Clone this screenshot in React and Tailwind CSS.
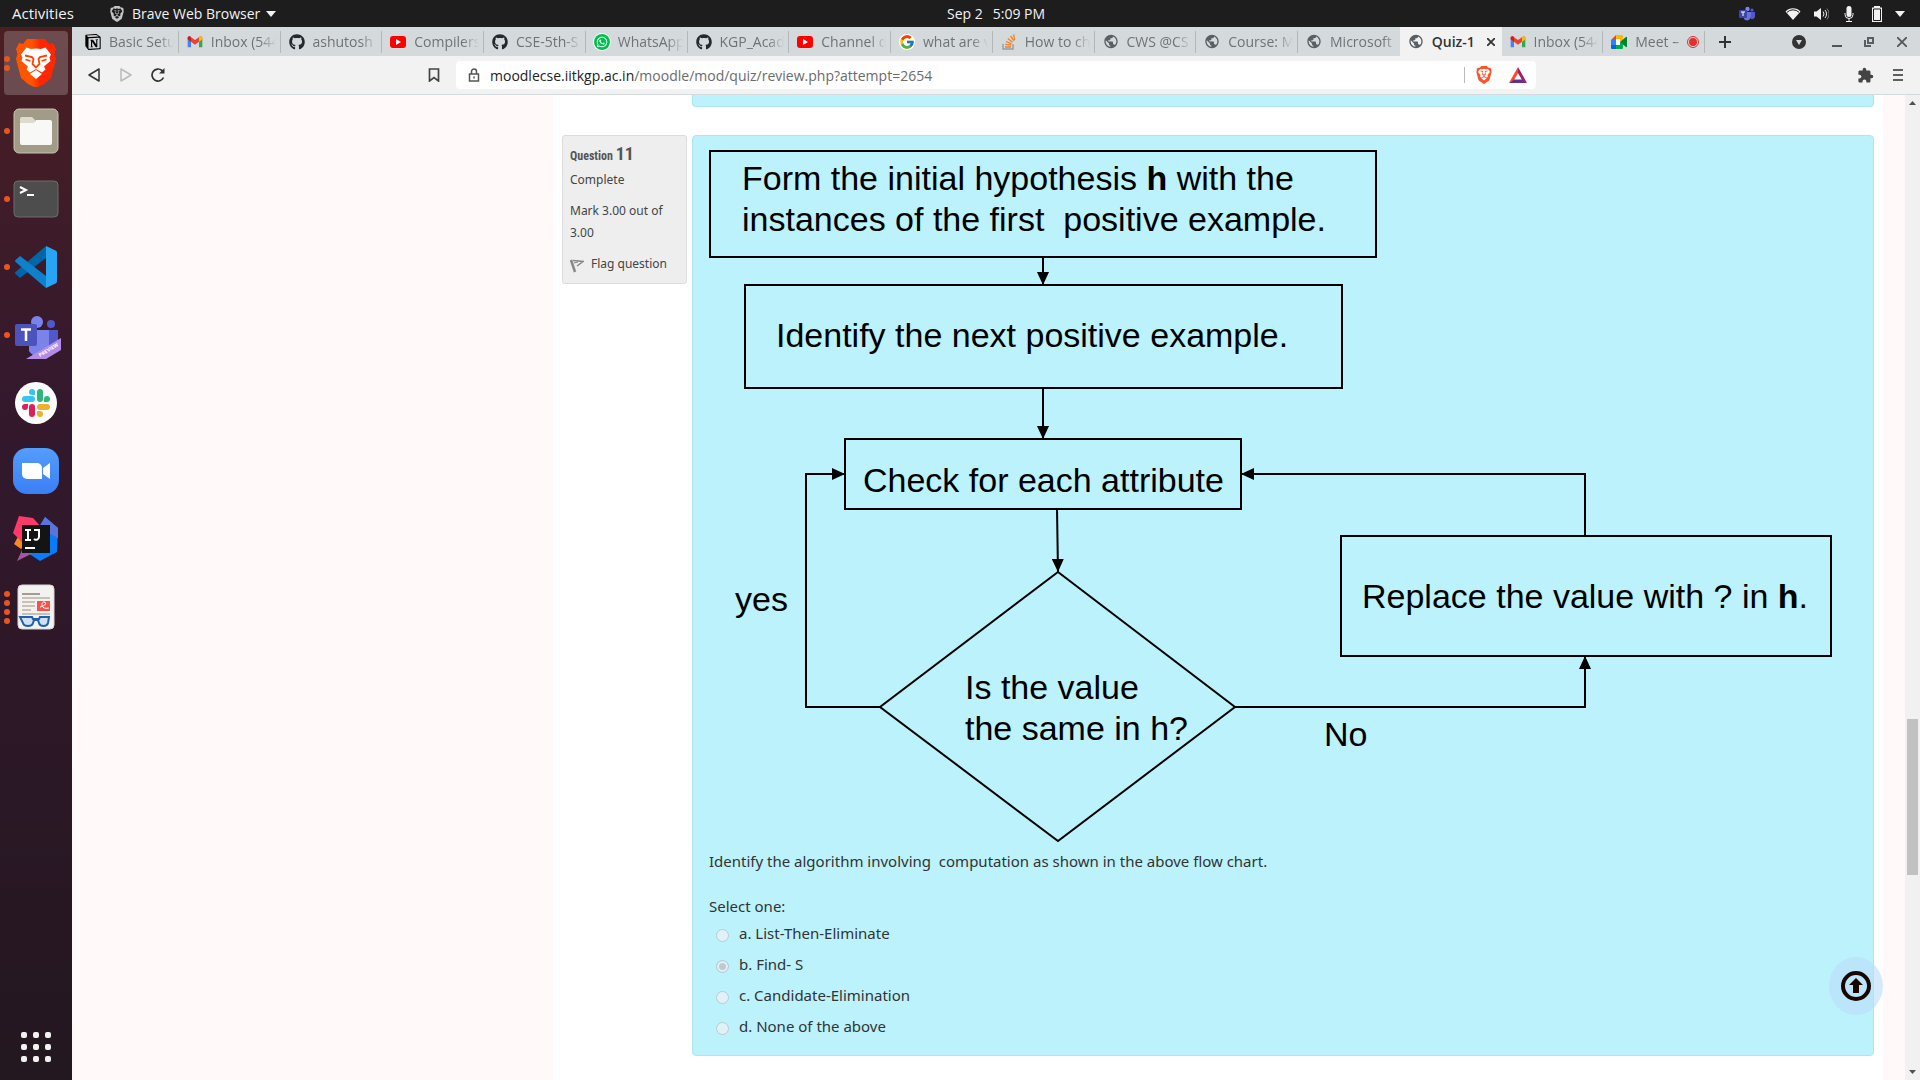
import React from "react";
import { SiBrave, SiNotion } from "react-icons/si";
import { FaGithub, FaWhatsapp } from "react-icons/fa";
import { MdExtension, MdPublic } from "react-icons/md";
import { FcGoogle } from "react-icons/fc";

function Gmail() {
  return (
    <svg viewBox="0 0 24 24" className="size-4">
      <path d="M1 20V7l5 4v9z" fill="#4285f4" />
      <path d="M18 20v-9l5-4v13z" fill="#34a853" />
      <path d="M1 8V6a2.6 2.6 0 0 1 4.2-2L12 9l6.8-5A2.6 2.6 0 0 1 23 6v2l-11 8z" fill="#ea4335" />
      <path d="M1 8V6a2.6 2.6 0 0 1 5-1v7z" fill="#c5221f" />
      <path d="M23 8V6a2.6 2.6 0 0 0-5-1v7z" fill="#fbbc04" />
    </svg>
  );
}

function YouTube() {
  return (
    <svg viewBox="0 0 16 16" className="size-4">
      <rect y="2" width="16" height="12" rx="3" fill="#ff0000" />
      <path d="M6 5v6l5-3z" fill="#fff" />
    </svg>
  );
}

function Meet() {
  return (
    <svg viewBox="0 0 16 16" className="size-4">
      <path d="M0 6l5-5v5z" fill="#ea4335" />
      <path d="M0 6h5v5H0z" fill="#2684fc" />
      <path d="M0 11h5v4H1a1 1 0 0 1-1-1z" fill="#0066da" />
      <path d="M5 1h6a1 1 0 0 1 1 1v5L9 8V5H5z" fill="#ffba00" />
      <path d="M5 11h4V8l3 2v4a1 1 0 0 1-1 1H5z" fill="#00ac47" />
      <path d="M9 8l6-5a.6.6 0 0 1 1 .5v9a.6.6 0 0 1-1 .5z" fill="#00832d" />
      <path d="M5 5h4v6H5z" fill="#fff" />
    </svg>
  );
}

function StackOverflow() {
  return (
    <svg viewBox="0 0 16 16" className="size-4" fill="none">
      <path d="M2 10v5h10v-5" stroke="#9a9c9f" strokeWidth="1.4" />
      <path d="M4 13h6M4.200 10.300l6 .9M5 7.500l5.500 2.300M6.800 4.500l4.700 3.700M9.500 2l3.500 4.800M12.500.500l1.300 5.500" stroke="#f48024" strokeWidth="1.300" />
    </svg>
  );
}

function WhatsApp() {
  return (
    <span className="flex size-4 items-center justify-center rounded-full bg-[#00bf4f] ring-1 ring-white">
      <FaWhatsapp className="size-3 text-white" />
    </span>
  );
}

function Google() {
  return (
    <span className="flex size-4 items-center justify-center rounded-full bg-white">
      <FcGoogle className="size-4" />
    </span>
  );
}

const github = <FaGithub className="size-4 text-[#24292e]" />;
const globe = <MdPublic className="size-[17px] text-[#5a5f63]" />;

const tabs = [
  { title: "Basic Setu", icon: <SiNotion className="size-4 text-black" /> },
  { title: "Inbox (544", icon: <Gmail /> },
  { title: "ashutosh", icon: github },
  { title: "Compilers", icon: <YouTube /> },
  { title: "CSE-5th-S", icon: github },
  { title: "WhatsApp", icon: <WhatsApp /> },
  { title: "KGP_Acad", icon: github },
  { title: "Channel d", icon: <YouTube /> },
  { title: "what are v", icon: <Google /> },
  { title: "How to ch", icon: <StackOverflow /> },
  { title: "CWS @CS", icon: globe },
  { title: "Course: M", icon: globe },
  { title: "Microsoft", icon: globe },
  { title: "Quiz-1", icon: globe, active: true },
  { title: "Inbox (544", icon: <Gmail /> },
  { title: "Meet –", icon: <Meet />, recording: true },
];

function TeamsTray() {
  return (
    <svg viewBox="0 0 16 16" className="size-4">
      <circle cx="8.5" cy="3" r="2.2" fill="#7b83eb" />
      <circle cx="13" cy="4" r="1.6" fill="#5059c9" />
      <path d="M5 6h7v5a4 4 0 0 1-7 2z" fill="#6a72dc" />
      <path d="M12 6h4v4a3 3 0 0 1-4 3z" fill="#5059c9" />
      <rect y="4" width="8" height="8" rx="1" fill="#3d45a8" />
      <path d="M2 6h4M4 6v4" stroke="#fff" fill="none" />
    </svg>
  );
}

function TopBar() {
  return (
    <header className="grid h-[27px] grid-cols-[1fr_auto_1fr] items-center bg-[#1d1d1d] px-3 text-[14px] text-[#f2f2f2]">
      <div className="flex items-center">
        <button className="w-[97px] text-left text-[15px]">Activities</button>
        <button className="flex items-center">
          <SiBrave className="mr-[7px] size-4 text-[#c4c4c4]" />
          Brave Web Browser
          <svg viewBox="0 0 10 6" className="ml-[6px] h-[6px] w-[10px]"><path d="M0 0h10L5 6z" fill="#f2f2f2" /></svg>
        </button>
      </div>
      <button className="ml-[72px] flex gap-[10px]"><span>Sep 2</span><span>5:09 PM</span></button>
      <div className="flex items-center justify-end">
        <span className="mr-[30px]"><TeamsTray /></span>
        <svg viewBox="0 0 16 16" className="mr-3 size-4">
          <path d="M.5 5.500a10.500 10.500 0 0 1 15 0L8 14z" fill="#f2f2f2" />
          <path d="M2 6.300a8.500 8.500 0 0 1 12 0" stroke="#1d1d1d" fill="none" />
        </svg>
        <svg viewBox="0 0 16 16" className="mr-3 size-4" fill="none" stroke="#f2f2f2">
          <path d="M1 5.500h2.500L8 2v12l-4.500-3.500H1z" fill="#f2f2f2" stroke="none" />
          <path d="M10 5.500a4 4 0 0 1 0 5M12 4a6 6 0 0 1 0 8" />
          <path d="M14 2.500a8.500 8.500 0 0 1 0 11" stroke="#777" />
        </svg>
        <svg viewBox="0 0 16 16" className="mr-3 size-4" fill="none" stroke="#f2f2f2">
          <rect x="5.500" y="0" width="5" height="11" rx="2.500" fill="#f2f2f2" stroke="none" />
          <path d="M4 7v1.500a4 4 0 0 0 8 0V7M8 12.500V15M5 15.500h6" />
        </svg>
        <svg viewBox="0 0 16 16" className="mr-[10px] size-4">
          <path d="M5 0h6v1.500h2V16H3V1.500h2z" fill="#f2f2f2" />
          <path d="M4.500 3h7v11.500h-7z" fill="none" stroke="#1d1d1d" />
        </svg>
        <svg viewBox="0 0 10 6" className="mr-[3px] h-[6px] w-[10px]"><path d="M0 0h10L5 6z" fill="#f2f2f2" /></svg>
      </div>
    </header>
  );
}

const dockApps = [
  {
    name: "Brave", dots: 2, active: true,
    icon: (
      <svg viewBox="0 0 40 48" className="h-12 w-10">
        <defs>
          <linearGradient id="braveDock" x1="0" x2="1"><stop offset=".4" stopColor="#ff5500" /><stop offset=".6" stopColor="#ff2600" /></linearGradient>
        </defs>
        <path d="M11 0h18l4 5 4-1 3 6-1.500 5 1.500 5-5 19-7 6-8 4-8-4-7-6L0 20l1.500-5L0 10l3-6 4 1z" fill="url(#braveDock)" />
        <path d="M20 9.500l5 .5 4.500-1.500 5.500 7-1.500 3 1 3.500-6.500 5.500 1.500 3-3.500 3-6-3.500-6 3.500-3.500-3 1.500-3-6.500-5.500 1-3.500-1.500-3 5.500-7L15 10z" fill="#fff" />
        <path d="M20 31l6 4-6 5-6-5z" fill="#fff" />
        <path d="M9 16.500l7 1.500 1.500 2-1 5 3.500 3.500 3.500-3.500-1-5L24 18l7-1.500M9.500 20.500l5 1.500M30.500 20.500l-5 1.500" fill="none" stroke="#ff4000" strokeWidth="1.800" />
      </svg>
    ),
  },
  {
    name: "Files", dots: 1,
    icon: (
      <svg viewBox="0 0 46 46" className="size-[46px]">
        <rect x="1" y="1" width="44" height="44" rx="5" fill="#a29b87" stroke="#c9c3b3" />
        <path d="M7 11a2 2 0 0 1 2-2h10l3 3v6H7z" fill="#dedace" />
        <path d="M7 15h14l2-3h14a2 2 0 0 1 2 2v21a2 2 0 0 1-2 2H9a2 2 0 0 1-2-2z" fill="#f8f8f7" />
      </svg>
    ),
  },
  {
    name: "Terminal", dots: 1,
    icon: (
      <svg viewBox="0 0 46 38" className="h-[38px] w-[46px]">
        <rect x="1" y="1" width="44" height="36" rx="4" fill="#4d4d4d" stroke="#6c6c6c" />
        <path d="M7 7l6 3-6 3" fill="none" stroke="#fff" strokeWidth="2" />
        <path d="M14 15h7" stroke="#fff" strokeWidth="2" />
      </svg>
    ),
  },
  {
    name: "Visual Studio Code", dots: 1,
    icon: (
      <svg viewBox="0 0 42 42" className="size-[42px]">
        <path d="M31 0v12L5 32l-4.500-4a1.500 1.500 0 0 1 0-2z" fill="#0065a9" />
        <path d="M31 42V30L5 10l-4.500 4a1.500 1.500 0 0 0 0 2z" fill="#0f80cc" />
        <path d="M31 0l9.500 4.500A2.500 2.500 0 0 1 42 7v28a2.500 2.500 0 0 1-1.500 2.500L31 42z" fill="#28a4f2" />
      </svg>
    ),
  },
  {
    name: "Teams", dots: 1,
    icon: (
      <svg viewBox="0 0 46 44" className="mt-1 ml-[3px] h-11 w-[46px]">
        <circle cx="22" cy="7" r="6" fill="#7b83eb" />
        <circle cx="36" cy="9" r="4" fill="#5059c9" />
        <path d="M30 15h13v14a9 9 0 0 1-13 7z" fill="#5059c9" />
        <path d="M14 15h20v18a11 11 0 0 1-20 3z" fill="#7b83eb" />
        <rect y="9" width="22" height="22" rx="2" fill="#4b53bc" />
        <path d="M6 14.500h10M11 14.500v11.500" stroke="#fff" strokeWidth="2.500" />
        <path d="M11 44L46 23v12L31 44z" fill="#b48be8" />
        <text x="25" y="42" transform="rotate(-31 25 42)" fontSize="5" fontWeight="700" fill="#fff">PREVIEW</text>
      </svg>
    ),
  },
  {
    name: "Slack", dots: 0,
    icon: (
      <svg viewBox="0 0 42 42" className="size-[42px]">
        <circle cx="21" cy="21" r="21" fill="#fff" />
        <g strokeWidth="6" strokeLinecap="round">
          <path d="M10 17h7" stroke="#36c5f0" /><path d="M25 10v7" stroke="#2eb67d" />
          <path d="M32 25h-7" stroke="#ecb22e" /><path d="M17 32v-7" stroke="#e01e5a" />
        </g>
        <path d="M20 13h-3a3 3 0 1 1 3-3z" fill="#36c5f0" />
        <path d="M29 20v-3a3 3 0 1 1 3 3z" fill="#2eb67d" />
        <path d="M22 29h3a3 3 0 1 1-3 3z" fill="#ecb22e" />
        <path d="M13 22v3a3 3 0 1 1-3-3z" fill="#e01e5a" />
      </svg>
    ),
  },
  {
    name: "Zoom", dots: 0,
    icon: (
      <svg viewBox="0 0 46 46" className="size-[46px]">
        <defs><linearGradient id="zoomDock" x2="0" y2="1"><stop stopColor="#539dfd" /><stop offset="1" stopColor="#3b7ff5" /></linearGradient></defs>
        <rect width="46" height="46" rx="14" fill="url(#zoomDock)" />
        <path d="M9 15h15a5 5 0 0 1 5 5v11H14a5 5 0 0 1-5-5z" fill="#fff" />
        <path d="M30 20l7-5v16l-7-5z" fill="#fff" />
      </svg>
    ),
  },
  {
    name: "IntelliJ IDEA", dots: 0,
    icon: (
      <svg viewBox="0 0 46 46" className="size-[46px]">
        <path d="M32 1l13 11-1 24-17 9-15-10 10-18z" fill="#087cfa" />
        <path d="M32 1l13 11v10L26 12z" fill="#5a74dc" />
        <path d="M1 28l5-9 8 9-6 5z" fill="#f98a1c" />
        <path d="M6 0l14 2 9 10-18 16L0 17z" fill="#fe3a6a" />
        <path d="M10 20v12L4 45l18-9z" fill="#a457a0" />
        <rect x="9" y="9" width="28" height="28" fill="#141414" />
        <path d="M12 14h6M15 14v10M12 24h6M21 14h5v7a3 3 0 0 1-5 2" fill="none" stroke="#fff" strokeWidth="2" />
        <path d="M12 32h10" stroke="#fff" strokeWidth="2" />
      </svg>
    ),
  },
  {
    name: "Document Viewer", dots: 4,
    icon: (
      <svg viewBox="0 0 38 46" className="h-[46px] w-[38px]">
        <rect x="1" y="1" width="36" height="44" rx="4" fill="#f4f2f0" stroke="#d9d4d0" />
        <path d="M5 10h18" stroke="#a59c90" strokeWidth="2" />
        <path d="M5 14h28M5 18h13M5 22h13M5 26h9M5 30h28" stroke="#c9c1b5" strokeWidth="2" />
        <rect x="20" y="17" width="13" height="10" fill="#f4524c" />
        <path d="M23 23c6-1 7-5 4-5s-4 8 5 6" fill="none" stroke="#fff" />
        <path d="M3 33h12l1 2h6l1-2h9l-1 6c-1 4-8 4-9 0l-1-3h-4l-1 3c-1 4-9 4-10 0z" fill="#cfe0f4" stroke="#1f5fae" strokeWidth="2" />
      </svg>
    ),
  },
];

function Dock() {
  return (
    <nav aria-label="Dock" className="flex w-[72px] shrink-0 flex-col items-center gap-1 bg-linear-to-b from-[#4a1f22] via-[#34182d] via-35% to-[#231720] pt-1">
      {dockApps.map((app) => (
        <button
          key={app.name}
          aria-label={app.name}
          className={app.active ? "relative flex size-16 items-center justify-center rounded bg-white/20" : "relative flex size-16 items-center justify-center"}
        >
          <span className="absolute inset-y-0 left-0 flex flex-col items-center justify-center gap-[3px]">
            {Array.from({ length: app.dots }, (_, i) => (
              <i key={i} className="size-[6px] rounded-full bg-[#e95420]" />
            ))}
          </span>
          {app.icon}
        </button>
      ))}
      <button aria-label="Show Applications" className="mt-auto mb-[18px] grid grid-cols-3 gap-[6px]">
        {Array.from({ length: 9 }, (_, i) => (
          <i key={i} className="size-[6px] rounded-[2px] bg-[#f2f2f0]" />
        ))}
      </button>
    </nav>
  );
}

function TabStrip() {
  return (
    <div className="flex h-[29px] bg-[#d4d9dc] pl-[5px]">
      <div className="flex min-w-0 flex-1" role="tablist">
        {tabs.map((tab, i) => (
          <div
            key={i}
            className={
              tab.active
                ? "flex min-w-0 flex-1 items-center bg-[#f2f2f2] pl-2 text-[#333]"
                : "flex min-w-0 flex-1 items-center pl-2 text-[#6f7376]"
            }
          >
            <span className="flex w-4 shrink-0 justify-center">{tab.icon}</span>
            <button
              role="tab"
              aria-selected={Boolean(tab.active)}
              className={
                tab.active
                  ? "ml-2 min-w-0 flex-1 overflow-hidden text-left text-[14px] font-semibold whitespace-nowrap"
                  : "ml-2 min-w-0 flex-1 overflow-hidden mask-r-from-75% text-left text-[14px] whitespace-nowrap"
              }
            >
              {tab.title}
            </button>
            {tab.active && (
              <button aria-label="Close tab" className="mr-[7px]">
                <svg viewBox="0 0 8 8" className="size-2"><path d="M0 0l8 8M8 0L0 8" stroke="#333" strokeWidth="1.8" /></svg>
              </button>
            )}
            {tab.recording && (
              <span className="mr-px flex size-3 shrink-0 items-center justify-center rounded-full border border-[#e53030]">
                <i className="size-2 rounded-full bg-[#e53030]" />
              </span>
            )}
            {!tab.active && i !== 12 && <i className="ml-1 h-[22px] w-px bg-[#b3b7ba]" />}
          </div>
        ))}
      </div>
      <div className="flex w-[215px] items-center">
        <button aria-label="New tab" className="ml-[14px]">
          <svg viewBox="0 0 12 12" className="size-3"><path d="M6 0v12M0 6h12" stroke="#333" strokeWidth="2" /></svg>
        </button>
        <button aria-label="Search tabs" className="ml-[61px]">
          <svg viewBox="0 0 14 14" className="size-[14px]"><circle cx="7" cy="7" r="7" fill="#333" /><path d="M4 5h6l-3 5z" fill="#d4d9dc" /></svg>
        </button>
        <button aria-label="Minimise" className="ml-[26px]">
          <svg viewBox="0 0 10 10" className="size-[10px]"><path d="M0 9h10" stroke="#555" strokeWidth="2" /></svg>
        </button>
        <button aria-label="Restore" className="ml-[22px]">
          <svg viewBox="0 0 10 10" className="size-[10px]" fill="none" stroke="#5a5f63" strokeWidth="2"><path d="M4 1h5v5H4z" /><path d="M1 3v6h6" /></svg>
        </button>
        <button aria-label="Close" className="ml-[23px]">
          <svg viewBox="0 0 10 10" className="size-[10px]"><path d="M0 0l10 10M10 0L0 10" stroke="#555" strokeWidth="1.8" /></svg>
        </button>
      </div>
    </div>
  );
}

function Toolbar() {
  return (
    <div className="flex h-[39px] items-center border-b border-[#d4d9dc] bg-[#f2f2f2]">
      <button aria-label="Back" className="ml-4">
        <svg viewBox="0 0 12 14" className="h-[14px] w-3"><path d="M11 1v12L1 7z" fill="none" stroke="#333" strokeWidth="1.5" strokeLinejoin="round" /></svg>
      </button>
      <button aria-label="Forward" className="ml-5">
        <svg viewBox="0 0 12 14" className="h-[14px] w-3"><path d="M1 1v12l10-6z" fill="none" stroke="#bbb" strokeWidth="1.5" strokeLinejoin="round" /></svg>
      </button>
      <button aria-label="Reload" className="ml-[19px]">
        <svg viewBox="0 0 14 14" className="size-[14px]"><path d="M12.500 9.500a6 6 0 1 1-1.500-7l1.500 1.500" fill="none" stroke="#333" strokeWidth="1.700" /><path d="M13.500 0v5.500H8z" fill="#333" /></svg>
      </button>
      <button aria-label="Bookmark" className="ml-[263px]">
        <svg viewBox="0 0 12 14" className="h-[14px] w-3"><path d="M1.500 1h9v12L6 9.500 1.500 13z" fill="none" stroke="#444" strokeWidth="1.700" /></svg>
      </button>
      <div className="ml-4 flex h-7 min-w-0 flex-1 items-center rounded bg-white pr-[9px] pl-3">
        <svg viewBox="0 0 12 14" className="h-[14px] w-3 shrink-0" fill="none" stroke="#555" strokeWidth="1.5"><rect x="1.5" y="6" width="9" height="7" /><path d="M3.500 6V3.500a2.500 2.500 0 0 1 5 0V6" /><path d="M6 8.500v2" /></svg>
        <label className="relative ml-[10px] flex h-full flex-1 items-center text-[14px]">
          <span className="pointer-events-none absolute text-[#6b6b6b]"><span className="text-[#222]">moodlecse.iitkgp.ac.in</span>/moodle/mod/quiz/review.php?attempt=2654</span>
          <input aria-label="Address" className="w-full bg-transparent outline-none" />
        </label>
        <i className="h-4 w-px bg-[#bbb]" />
        <button aria-label="Brave Shields" className="ml-[10px]"><SiBrave className="size-[18px] text-[#fb542b]" /></button>
        <button aria-label="Rewards" className="ml-4">
          <svg viewBox="0 0 18 16" className="h-4 w-[18px]"><path d="M9 0L0 16l5-3 4-7z" fill="#ff4724" /><path d="M9 0l9 16-5-3-4-7z" fill="#9e1f63" /><path d="M0 16h18l-5-3.500H5z" fill="#662d91" /></svg>
        </button>
      </div>
      <button aria-label="Extensions" className="ml-[321px]"><MdExtension className="size-[17px] text-[#444]" /></button>
      <button aria-label="Menu" className="mr-[17px] ml-[19px] flex flex-col gap-[3px]">
        <i className="h-[2px] w-[10px] bg-[#5f5f5f]" /><i className="h-[2px] w-[10px] bg-[#5f5f5f]" /><i className="h-[2px] w-[10px] bg-[#5f5f5f]" />
      </button>
    </div>
  );
}

function FlowChart() {
  return (
    <svg viewBox="0 0 1126 696" className="h-auto w-[1126px] max-w-full" role="img" aria-label="Flow chart">
      <defs>
        <marker id="arrow" viewBox="0 0 13 12" refX="13" refY="6" markerWidth="13" markerHeight="12" markerUnits="userSpaceOnUse" orient="auto">
          <path d="M0 0l13 6-13 6z" />
        </marker>
      </defs>
      <g fill="none" stroke="#000" strokeWidth="2">
        <rect x="1" y="2" width="666" height="106" />
        <rect x="36" y="136" width="597" height="103" />
        <rect x="136" y="290" width="396" height="70" />
        <rect x="632" y="387" width="490" height="120" />
        <path d="M349 423l177 135-177 134-178-134z" />
        <path d="M334 108v28" markerEnd="url(#arrow)" />
        <path d="M334 239v51" markerEnd="url(#arrow)" />
        <path d="M348 360l1 63" markerEnd="url(#arrow)" />
        <path d="M171 558H97V325h39" markerEnd="url(#arrow)" />
        <path d="M876 387v-62H532" markerEnd="url(#arrow)" />
        <path d="M526 558h350v-51" markerEnd="url(#arrow)" />
      </g>
      <g className="font-['Liberation_Sans',Arial,sans-serif] text-[34px]">
        <text x="33" y="41">Form the initial hypothesis <tspan className="font-bold">h</tspan> with the</text>
        <text x="33" y="82">{"instances of the first \u00a0positive example."}</text>
        <text x="67" y="198">Identify the next positive example.</text>
        <text x="154" y="343">Check for each attribute</text>
        <text x="26" y="462">yes</text>
        <text x="256" y="550">Is the value</text>
        <text x="256" y="591">the same in h?</text>
        <text x="653" y="459">Replace the value with ? in <tspan className="font-bold">h</tspan>.</text>
        <text x="615" y="597">No</text>
      </g>
    </svg>
  );
}

const answers = ["a. List-Then-Eliminate", "b. Find- S", "c. Candidate-Elimination", "d. None of the above"];

function Question() {
  return (
    <section className="flex items-start gap-[5px] font-['Noto_Sans',sans-serif]">
      <aside className="w-[125px] shrink-0 rounded-[3px] border border-[#dcdcdc] bg-[#eeeeee] px-[7px] pt-[6px] pb-2 text-[12px] leading-[22px] text-[#444]">
        <h3 className="mb-px font-['Roboto_Condensed','Liberation_Sans_Narrow',Roboto,sans-serif] text-[12px] leading-6 font-bold text-[#555]">
          Question <span className="text-[18px]">11</span>
        </h3>
        <p className="mb-[9px]">Complete</p>
        <p className="mb-[9px]">Mark 3.00 out of 3.00</p>
        <button className="flex items-center">
          <svg viewBox="0 0 14 14" className="mt-1 mr-[7px] size-[14px]" fill="none" stroke="#888"><path d="M1 1l4 12" strokeWidth="2.5" /><path d="M3 1.500l10 1-6 4.500" strokeWidth="1.5" /><path d="M4 4l4-1" /></svg>
          Flag question
        </button>
      </aside>
      <div className="min-w-0 flex-1 rounded border border-[#afe5ee] bg-[#bbf2fc] px-4 pt-[13px] pb-[13px] text-[15px] text-[#333]">
        <FlowChart />
        <p className="mt-1 leading-6 whitespace-pre-wrap">Identify the algorithm involving  computation as shown in the above flow chart.</p>
        <fieldset className="mt-[21px]">
          <legend className="leading-6">Select one:</legend>
          {answers.map((answer, i) => (
            <label key={answer} className="flex h-[31px] items-center">
              <input
                type="radio"
                name="q11"
                disabled
                defaultChecked={i === 1}
                className="mt-1 mr-[10px] ml-[7px] size-[13px] appearance-none rounded-full border border-[#bccbd0] bg-[#e0f2f8] checked:bg-[#bccbd0] checked:shadow-[inset_0_0_0_2px_#e0f2f8]"
              />
              {answer}
            </label>
          ))}
        </fieldset>
      </div>
    </section>
  );
}

function ScrollBar() {
  return (
    <div aria-hidden="true" className="flex w-[15px] shrink-0 flex-col items-center bg-[#f1f1f1]">
      <svg viewBox="0 0 7 4" className="mt-[6px] h-1 w-[7px]"><path d="M0 4h7L3.500 0z" fill="#505050" /></svg>
      <i className="grow-[614]" />
      <i className="w-[11px] grow-[156] bg-[#c1c1c1]" />
      <i className="grow-[195]" />
      <svg viewBox="0 0 7 4" className="mb-[6px] h-1 w-[7px]"><path d="M0 0h7L3.500 4z" fill="#505050" /></svg>
    </div>
  );
}

export default function App() {
  return (
    <div className="flex h-screen flex-col overflow-hidden font-['Open_Sans',sans-serif]">
      <TopBar />
      <div className="flex min-h-0 flex-1">
        <Dock />
        <div className="flex min-w-0 flex-1 flex-col">
          <TabStrip />
          <Toolbar />
          <div className="relative flex min-h-0 flex-1 bg-[#fff9f9]">
            <main className="mr-[22px] ml-[481px] min-w-0 flex-1 overflow-hidden bg-white px-[9px]">
              <div className="mb-7 ml-[130px] h-3 rounded-b border border-t-0 border-[#afe5ee] bg-[#bbf2fc]" />
              <Question />
            </main>
            <button aria-label="Back to top" className="absolute right-[37px] bottom-[65px] flex h-[58px] w-[54px] items-center justify-center rounded-[50%] bg-[#b9dcfa]/60">
              <svg viewBox="0 0 30 30" className="size-[30px]"><circle cx="15" cy="15" r="13" fill="none" stroke="#1a0500" strokeWidth="4" /><path d="M15 7l7 7h-4v8h-6v-8H8z" fill="#1a0500" /></svg>
            </button>
            <ScrollBar />
          </div>
        </div>
      </div>
    </div>
  );
}
